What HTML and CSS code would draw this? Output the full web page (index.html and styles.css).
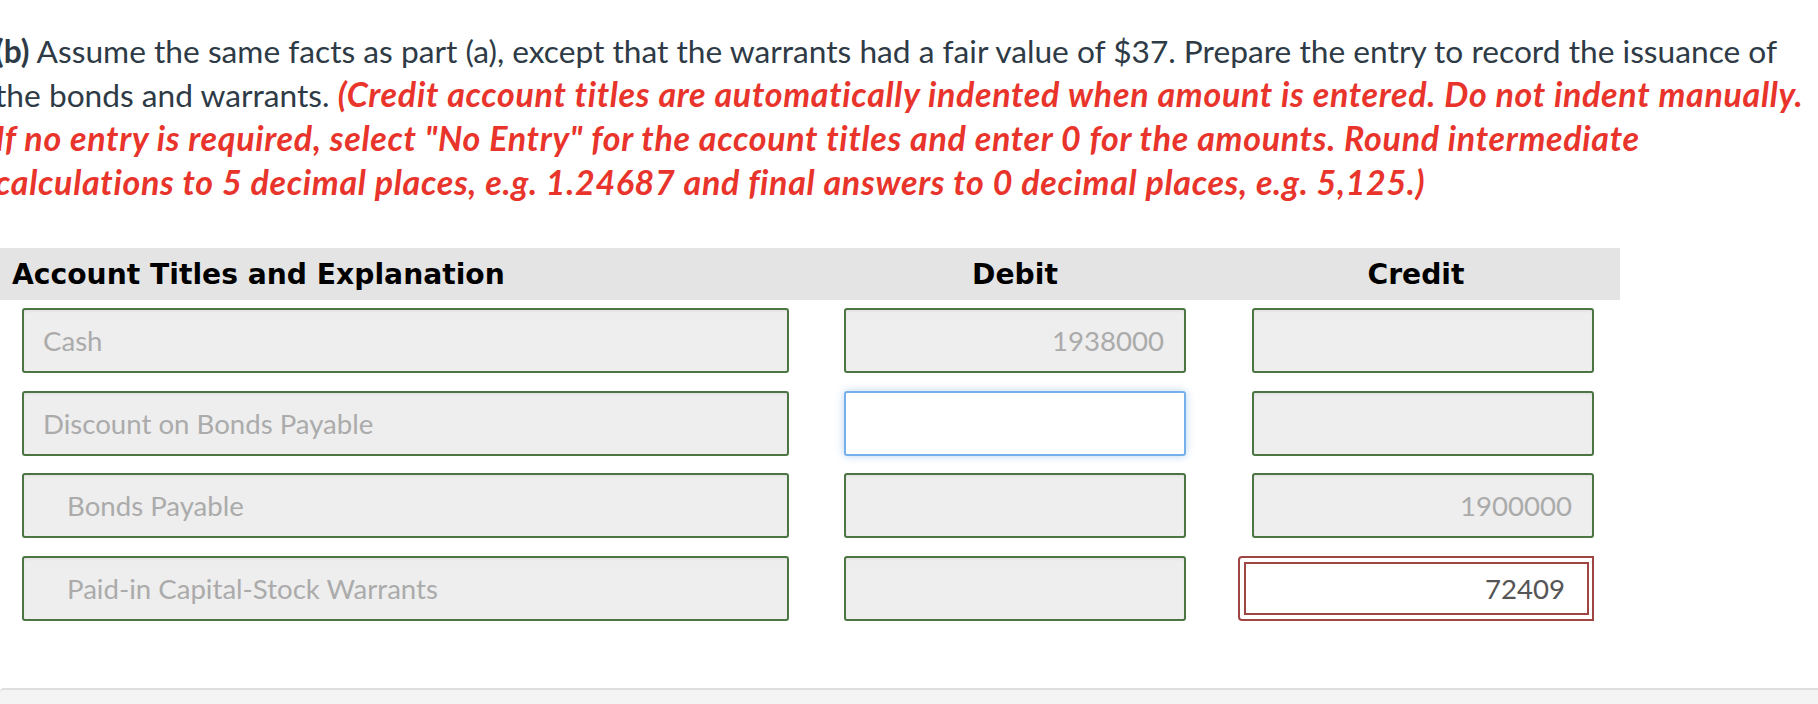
FILE: index.html
```html
<!DOCTYPE html>
<html lang="en">
<head>
<meta charset="utf-8">
<title>Journal entry</title>
<link rel="stylesheet" href="styles.css">
</head>
<body>
<div class="page">
  <p class="question"><b>(b)</b> Assume the same facts as part (a), except that the warrants had a fair value of $37. Prepare the entry to record the issuance of the bonds and warrants. <span class="note">(Credit account titles are automatically indented when amount is entered. Do not indent manually. If no entry is required, select "No Entry" for the account titles and enter 0 for the amounts. Round intermediate calculations to 5 decimal places, e.g. 1.24687 and final answers to 0 decimal places, e.g. 5,125.)</span></p>

  <div class="journal">
    <div class="head">
      <div class="h-account">Account Titles and Explanation</div>
      <div class="h-amt h-debit">Debit</div>
      <div class="h-amt h-credit">Credit</div>
    </div>

    <div class="row">
      <input class="field account" type="text" value="Cash" readonly>
      <input class="field amount debit" type="text" value="1938000" readonly>
      <input class="field amount credit" type="text" value="" readonly>
    </div>

    <div class="row">
      <input class="field account" type="text" value="Discount on Bonds Payable" readonly>
      <input class="field amount debit focused" type="text" value="">
      <input class="field amount credit" type="text" value="" readonly>
    </div>

    <div class="row">
      <input class="field account indented" type="text" value="Bonds Payable" readonly>
      <input class="field amount debit" type="text" value="" readonly>
      <input class="field amount credit" type="text" value="1900000" readonly>
    </div>

    <div class="row">
      <input class="field account indented" type="text" value="Paid-in Capital-Stock Warrants" readonly>
      <input class="field amount debit" type="text" value="" readonly>
      <div class="wrong">
        <input class="field amount wrong-input" type="text" value="72409" readonly>
      </div>
    </div>
  </div>

  <div class="footer-bar"></div>
</div>
</body>
</html>
```

FILE: styles.css
```css
html, body {
  margin: 0;
  padding: 0;
  background: #ffffff;
}

body {
  font-family: Lato, "Open Sans", "Liberation Sans", sans-serif;
  overflow: hidden;
}

.page {
  width: 1818px;
  height: 704px;
  overflow: hidden;
  display: flex;
  flex-direction: column;
}

.question {
  margin: 0 0 0 -5px;
  padding-top: 29px;
  width: 1820px;
  font-size: 31.7px;
  line-height: 44px;
  color: #2e3b46;
}

.question b {
  font-weight: 700;
}

.note {
  color: #e8342b;
  font-weight: 700;
  font-style: italic;
  font-size: 34px;
  line-height: 30px;
  letter-spacing: 0.68px;
}

.journal {
  width: 1620px;
  margin-top: 43px;
  display: flex;
  flex-direction: column;
  gap: 17.5px;
}

.head {
  display: flex;
  align-items: center;
  height: 52px;
  padding-left: 12px;
  background: #e4e4e4;
  margin-bottom: -9.5px;
  font-family: "DejaVu Sans", Verdana, sans-serif;
  font-weight: 700;
  font-size: 28.2px;
  color: #000000;
}

.h-account { width: 832px; flex: none; }
.h-amt { width: 342px; flex: none; text-align: center; }
.h-credit { margin-left: 59px; }

.row {
  display: flex;
  padding-left: 22px;
  height: 65px;
}

.field {
  box-sizing: border-box;
  flex: none;
  height: 65px;
  margin: 0;
  border: 2px solid #4b7543;
  border-radius: 3px;
  background: #eeeeee;
  font-family: Lato, "Open Sans", "Liberation Sans", sans-serif;
  font-size: 27.6px;
  color: #ababab;
  padding: 0 20px 0 19px;
  outline: none;
  box-shadow: inset 0 2px 2px rgba(0, 0, 0, 0.04);
}

.field.account { width: 767px; }
.field.debit { width: 342px; margin-left: 55px; }
.field.credit { width: 342px; margin-left: 66px; }

.field.indented {
  padding-left: 43px;
}

.field.amount {
  text-align: right;
}

.field.focused {
  background: #ffffff;
  border-color: #76b0ea;
  box-shadow: 0 0 8px rgba(102, 160, 230, 0.45);
}

.wrong {
  box-sizing: border-box;
  flex: none;
  width: 356px;
  height: 65px;
  margin-left: 52px;
  border: 2px solid #9f4644;
  border-radius: 4px 0 0 4px;
  padding: 4px 3px 4px 4px;
  background: #ffffff;
}

.wrong-input {
  display: block;
  width: 100%;
  height: 53px;
  border-color: #9f4644;
  border-radius: 0;
  background: #ffffff;
  color: #555555;
  padding-right: 22px;
  box-shadow: none;
}

.footer-bar {
  margin-top: auto;
  height: 14px;
  border-top: 2px solid #dedede;
  border-top-left-radius: 4px;
  background: #f4f4f4;
}
```
